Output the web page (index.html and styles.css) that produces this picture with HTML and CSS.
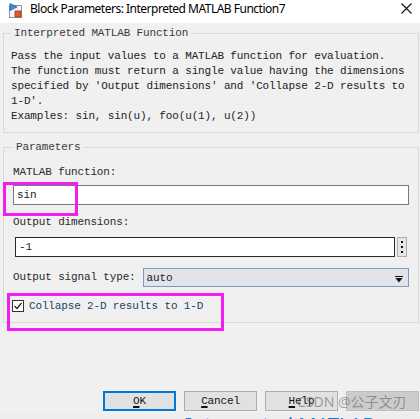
FILE: index.html
```html
<!DOCTYPE html>
<html>
<head>
<meta charset="utf-8">
<link rel="stylesheet" href="styles.css">
</head>
<body>
<div class="window">
  <div class="titlebar">
    <svg class="app-icon" width="14" height="15" viewBox="0 0 14 15">
      <rect x="0.5" y="2.5" width="12" height="12" fill="#f4f6f8" stroke="#8a96a3"/>
      <path d="M1 0.5 L8 4 L1 7.5 Z" fill="#3c8fd8" stroke="#1f5fa8" stroke-width="0.8"/>
      <rect x="6" y="8" width="6" height="6" fill="#e8542b" stroke="#b03010" stroke-width="0.8"/>
    </svg>
    <span class="title">Block Parameters: Interpreted MATLAB Function7</span>
    <svg class="close" width="11" height="11" viewBox="0 0 11 11">
      <path d="M0.5 0.5 L10.5 10.5 M10.5 0.5 L0.5 10.5" stroke="#111" stroke-width="1.1"/>
    </svg>
  </div>

  <fieldset class="group desc">
    <legend>Interpreted MATLAB Function</legend>
    <p class="desc-text">Pass the input values to a MATLAB function for evaluation.<br>The function must return a single value having the dimensions<br>specified by 'Output dimensions' and 'Collapse 2-D results to<br>1-D'.<br>Examples: sin, sin(u), foo(u(1), u(2))</p>
  </fieldset>

  <fieldset class="group params">
    <legend>Parameters</legend>
    <div class="label l1">MATLAB function:</div>
    <div class="input fn">sin</div>
    <div class="label l2">Output dimensions:</div>
    <div class="row dims-row">
      <div class="input dims">-1</div>
      <div class="dots"><i></i><i></i><i></i></div>
    </div>
    <div class="row sig-row">
      <span class="label">Output signal type:</span>
      <div class="select">
        <span>auto</span>
        <svg class="arrow" width="8" height="7" viewBox="0 0 8 7">
          <path d="M0 0.5 H8" stroke="#111" stroke-width="1"/>
          <path d="M0.5 2 H7.5 L4 6.5 Z" fill="#111"/>
        </svg>
      </div>
    </div>
    <div class="row check-row">
      <span class="box">
        <svg width="10" height="10" viewBox="0 0 10 10"><path d="M1.5 5 L4 7.5 L8.7 1.8" fill="none" stroke="#222" stroke-width="1.3"/></svg>
      </span>
      <span class="check-text">Collapse 2-D results to 1-D</span>
    </div>
  </fieldset>

  <div class="buttons">
    <div class="btn default"><span><u>O</u>K</span></div>
    <div class="btn"><span><u>C</u>ancel</span></div>
    <div class="btn"><span><u>H</u>elp</span></div>
    <div class="btn disabled"></div>
  </div>

  <div class="mark mark1"></div>
  <div class="mark mark2"></div>
  <div class="watermark">CSDN @公子文刃</div>
</div>
<div class="below"><span>Interpreted MATLAB</span></div>
</body>
</html>
```

FILE: styles.css
```css
html, body {
  margin: 0;
  padding: 0;
}
body {
  width: 420px;
  height: 419px;
  overflow: hidden;
  background: #e8e8e8;
  font-family: "Liberation Mono", "DejaVu Sans Mono", monospace;
  font-size: 11px;
  letter-spacing: -0.15px;
  color: #222;
}
.window {
  position: relative;
  height: 413px;
  background: #f0f0f0;
  display: flex;
  flex-direction: column;
}
.titlebar {
  height: 21px;
  padding-top: 2px;
  background: #ffffff;
  display: flex;
  align-items: flex-start;
  font-family: "Noto Sans", "Open Sans", sans-serif;
  letter-spacing: -0.5px;
  font-size: 12px;
  color: #000;
}
.app-icon {
  margin-left: 9px;
  margin-top: 1px;
}
.title {
  margin-left: 7px;
  line-height: 14px;
  white-space: nowrap;
}
.close {
  margin-left: auto;
  margin-right: 8px;
  margin-top: 1px;
}
.group {
  margin: 0 1px 0 3px;
  border: 1px solid #d9d9d9;
  padding: 0 0 0 7px;
  min-width: 0;
}
.group legend {
  padding: 0 3px;
  margin-left: 0;
  line-height: 16px;
  color: #3a3a3a;
}
.desc {
  margin-top: 2px;
  padding-bottom: 8px;
}
.desc-text {
  margin: 8px 0 0;
  line-height: 15px;
  white-space: nowrap;
}
.params {
  margin-top: 6px;
  padding-left: 9px;
  padding-bottom: 9px;
}
.label {
  line-height: 15px;
  color: #2a2a2a;
}
.l1 { margin-top: 10px; }
.l2 { margin-top: 10px; }
.input {
  box-sizing: border-box;
  height: 20px;
  background: #fff;
  border: 1px solid #7a7a7a;
  line-height: 18px;
  padding-left: 3px;
}
.fn {
  margin-top: 5px;
  width: 396px;
}
.row {
  display: flex;
  align-items: center;
}
.dims-row {
  margin-top: 7px;
  padding-left: 2px;
}
.dims {
  width: 380px;
  border-color: #2a2a2a;
}
.dots {
  box-sizing: border-box;
  margin-left: 2px;
  width: 10px;
  height: 20px;
  border: 1px solid #adadad;
  background: #e6e6e6;
  display: flex;
  flex-direction: column;
  align-items: center;
  justify-content: center;
  gap: 3px;
}
.dots i {
  display: block;
  width: 2px;
  height: 2px;
  background: #111;
}
.sig-row {
  margin-top: 11px;
  height: 19px;
}
.select {
  box-sizing: border-box;
  margin-left: 7px;
  width: 266px;
  height: 19px;
  border: 1px solid #7f9db9;
  background: #e1e4e8;
  display: flex;
  align-items: center;
  padding-left: 3px;
  padding-right: 5px;
}
.select span {
  flex: 1;
}
.arrow {
  margin-top: 4px;
}
.check-row {
  margin-top: 11px;
  height: 15px;
}
.box {
  box-sizing: border-box;
  width: 12px;
  height: 12px;
  margin-left: -1px;
  border: 1px solid #333;
  background: #fff;
  display: flex;
  align-items: center;
  justify-content: center;
}
.check-text {
  margin-left: 5px;
  color: #24406a;
}
.buttons {
  margin-top: 68px;
  padding-left: 103px;
  display: flex;
  gap: 8px;
}
.btn {
  box-sizing: border-box;
  width: 73px;
  height: 20px;
  border: 1px solid #adadad;
  background: #e1e1e1;
  display: flex;
  align-items: center;
  justify-content: center;
  color: #111;
}
.btn u {
  text-decoration-thickness: 1.5px;
  text-underline-offset: 2px;
}
.btn.default {
  border: 2px solid #0078d7;
}
.btn.disabled {
  background: #cccccc;
  border-color: #bfbfbf;
}
.mark {
  position: absolute;
  border: 3px solid #f01ef0;
  box-sizing: border-box;
}
.mark1 {
  left: 3px;
  top: 182px;
  width: 75px;
  height: 34px;
}
.mark2 {
  left: 7px;
  top: 293px;
  width: 217px;
  height: 38px;
}
.watermark {
  position: absolute;
  left: 297px;
  top: 393px;
  font-family: "Noto Sans", "Noto Sans CJK SC", sans-serif;
  font-size: 14px;
  line-height: 18px;
  letter-spacing: 0;
  color: rgba(80, 80, 80, 0.5);
  white-space: nowrap;
}
.below {
  height: 6px;
  overflow: hidden;
  padding-left: 185px;
  background: #eeeeee;
}
.below span {
  display: block;
  font-family: "Noto Sans", sans-serif;
  letter-spacing: 0;
  font-size: 20px;
  line-height: 20px;
  margin-top: 2px;
  color: #2a74c6;
  white-space: nowrap;
}
```
